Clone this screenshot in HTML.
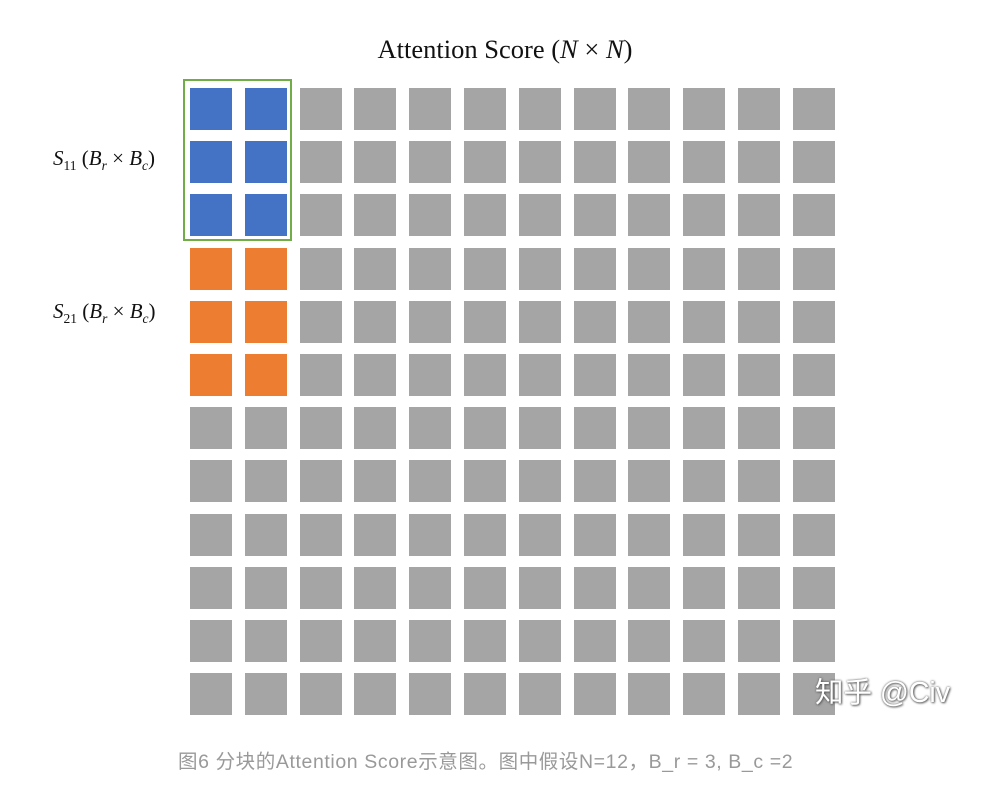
<!DOCTYPE html>
<html><head><meta charset="utf-8"><style>
body{margin:0;width:985px;height:800px;background:#fff;position:relative;overflow:hidden}
.t{position:absolute;left:0;width:1010px;top:34px;text-align:center;font:26.5px "Liberation Serif",serif;color:#111}
.g{position:absolute;left:190px;top:88px;display:grid;grid-template-columns:repeat(12,42px);grid-auto-rows:42px;column-gap:12.8px;row-gap:11.2px}
.g div{background:#a5a5a5}
.g div:nth-child(1),.g div:nth-child(2),.g div:nth-child(13),.g div:nth-child(14),.g div:nth-child(25),.g div:nth-child(26){background:#4472c4}
.g div:nth-child(37),.g div:nth-child(38),.g div:nth-child(49),.g div:nth-child(50),.g div:nth-child(61),.g div:nth-child(62){background:#ed7d31}
.box{position:absolute;left:183px;top:79px;width:105px;height:158px;border:2px solid #70ad47}
.l{position:absolute;left:53px;font:21px "Liberation Serif",serif;color:#111}
.l sub{font-size:13.5px}
.c{position:absolute;left:178px;top:745px;font:19.5px "Liberation Sans","Noto Sans CJK SC",sans-serif;color:#999;white-space:nowrap;letter-spacing:0.6px}
.w{position:absolute;left:815px;top:670px;font:28.5px "Liberation Sans","Noto Sans CJK SC",sans-serif;color:#fff;text-shadow:0 0 2px #555,1px 1px 2px #666}
</style></head><body>
<div class="t">Attention Score (<i>N</i> × <i>N</i>)</div>
<div class="g">
<div></div><div></div><div></div><div></div><div></div><div></div><div></div><div></div><div></div><div></div><div></div><div></div>
<div></div><div></div><div></div><div></div><div></div><div></div><div></div><div></div><div></div><div></div><div></div><div></div>
<div></div><div></div><div></div><div></div><div></div><div></div><div></div><div></div><div></div><div></div><div></div><div></div>
<div></div><div></div><div></div><div></div><div></div><div></div><div></div><div></div><div></div><div></div><div></div><div></div>
<div></div><div></div><div></div><div></div><div></div><div></div><div></div><div></div><div></div><div></div><div></div><div></div>
<div></div><div></div><div></div><div></div><div></div><div></div><div></div><div></div><div></div><div></div><div></div><div></div>
<div></div><div></div><div></div><div></div><div></div><div></div><div></div><div></div><div></div><div></div><div></div><div></div>
<div></div><div></div><div></div><div></div><div></div><div></div><div></div><div></div><div></div><div></div><div></div><div></div>
<div></div><div></div><div></div><div></div><div></div><div></div><div></div><div></div><div></div><div></div><div></div><div></div>
<div></div><div></div><div></div><div></div><div></div><div></div><div></div><div></div><div></div><div></div><div></div><div></div>
<div></div><div></div><div></div><div></div><div></div><div></div><div></div><div></div><div></div><div></div><div></div><div></div>
<div></div><div></div><div></div><div></div><div></div><div></div><div></div><div></div><div></div><div></div><div></div><div></div>
</div>
<div class="box"></div>
<div class="l" style="top:146px"><i>S</i><sub>11</sub> (<i>B<sub>r</sub></i> × <i>B<sub>c</sub></i>)</div>
<div class="l" style="top:299px"><i>S</i><sub>21</sub> (<i>B<sub>r</sub></i> × <i>B<sub>c</sub></i>)</div>
<div class="w">知乎 @Civ</div>
<div class="c">图6 分块的Attention Score示意图。图中假设N=12，B_r = 3, B_c =2</div>
</body></html>
